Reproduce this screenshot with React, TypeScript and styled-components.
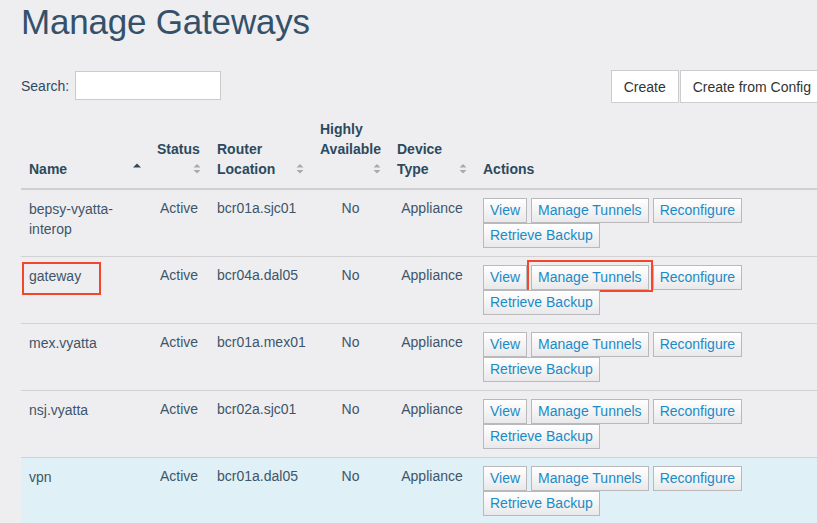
import React from "react";
import styled, { createGlobalStyle, css } from "styled-components";

const GlobalStyle = createGlobalStyle`
  html, body {
    margin: 0;
    padding: 0;
    overflow: hidden;
    background: #eeeef1;
  }
  body {
    font-family: "Liberation Sans", Arial, sans-serif;
    font-size: 14px;
    color: #3c5367;
  }
`;

const Page = styled.div`
  width: 803px;
  padding-left: 21px;
`;

const Title = styled.h1`
  margin: 1px 0 0;
  font-size: 35px;
  line-height: 41px;
  font-weight: normal;
  color: #35516a;
  letter-spacing: -0.2px;
`;

const Toolbar = styled.div`
  display: flex;
  justify-content: space-between;
  align-items: flex-start;
  margin-top: 28px;
  margin-bottom: 8px;
`;

const SearchLabel = styled.label`
  display: flex;
  align-items: center;
  gap: 6px;
  height: 31px;
  font-size: 14px;
  color: #2f4a5f;
`;

const SearchInput = styled.input`
  width: 146px;
  height: 29px;
  box-sizing: border-box;
  border: 1px solid #cbcbcb;
  background: #fff;
  margin: 0;
  padding: 0 6px;
  font: inherit;
`;

const ButtonGroup = styled.div`
  display: flex;
  gap: 1px;
`;

const ToolButton = styled.button`
  height: 33px;
  box-sizing: border-box;
  padding: 0 12px;
  border: 1px solid #cdcdcd;
  background: #fff;
  color: #333;
  font-family: "Liberation Sans", Arial, sans-serif;
  font-size: 14px;
  margin: 0;
`;

const Table = styled.table`
  width: 100%;
  border-collapse: collapse;
  table-layout: fixed;
`;

const Th = styled.th`
  vertical-align: bottom;
  text-align: left;
  padding: 8px 8px 9px;
  font-size: 14px;
  line-height: 20px;
  font-weight: bold;
  color: #2c4a5e;
  border-bottom: 2px solid #cfcfd2;
`;

const HeadLines = styled.div`
  display: flex;
  flex-direction: column;
`;

const HeadLine = styled.div`
  display: flex;
  justify-content: space-between;
  align-items: center;
  white-space: nowrap;
  height: 20px;
`;

const Tr = styled.tr<{ $active?: boolean }>`
  border-bottom: 1px solid #d2d2d5;
  ${(p) =>
    p.$active &&
    css`
      background: #dff0f7;
      border-bottom: none;
    `}
`;

const Td = styled.td<{ $align?: "left" | "center" }>`
  vertical-align: top;
  padding: 8px 8px 8px;
  font-size: 14px;
  line-height: 20px;
  color: #3e5569;
  text-align: ${(p) => p.$align ?? "left"};
  &:first-child {
    padding-top: 9px;
  }
`;

const NameText = styled.span<{ $highlight?: boolean }>`
  position: relative;
  ${(p) =>
    p.$highlight &&
    css`
      &::after {
        content: "";
        position: absolute;
        left: -7px;
        top: -6px;
        width: 79px;
        height: 33px;
        box-sizing: border-box;
        border: 2px solid #f2472b;
      }
    `}
`;

const Actions = styled.div`
  display: flex;
  flex-wrap: wrap;
  column-gap: 4px;
  row-gap: 0;
`;

const ActionButton = styled.button<{ $highlight?: boolean }>`
  position: relative;
  height: 25px;
  box-sizing: border-box;
  padding: 0 6px;
  margin: 0;
  border: 1px solid #b9b9bb;
  background: linear-gradient(#ffffff, #e9e9eb);
  color: #1b8bc7;
  font-family: "Liberation Sans", Arial, sans-serif;
  font-size: 14px;
  line-height: 23px;
  ${(p) =>
    p.$highlight &&
    css`
      &::after {
        content: "";
        position: absolute;
        left: -5px;
        right: -5px;
        top: -6px;
        bottom: -3px;
        border: 2px solid #f2472b;
      }
    `}
`;

const SortIcon = ({ dir }: { dir?: "asc" }) => (
  <svg width="8" height="12" viewBox="0 0 8 12" aria-hidden>
    {dir === "asc" ? (
      <path d="M0 4.5 L4 0.5 L8 4.5 Z" fill="#2c4a5e" />
    ) : (
      <>
        <path d="M0.5 4.5 L4 1 L7.5 4.5 Z" fill="#a9a9ad" />
        <path d="M0.5 7 L4 10.5 L7.5 7 Z" fill="#a9a9ad" />
      </>
    )}
  </svg>
);

type Col = { lines: string[]; width?: number; dir?: "asc"; sortable: boolean };

const columns: Col[] = [
  { lines: ["Name"], width: 128, dir: "asc", sortable: true },
  { lines: ["Status", ""], width: 60, sortable: true },
  { lines: ["Router", "Location"], width: 103, sortable: true },
  { lines: ["Highly", "Available", ""], width: 77, sortable: true },
  { lines: ["Device", "Type"], width: 86, sortable: true },
  { lines: ["Actions"], sortable: false },
];

type Row = { name: string[]; router: string; highlight?: boolean; active?: boolean };

const rows: Row[] = [
  { name: ["bepsy-vyatta-", "interop"], router: "bcr01a.sjc01" },
  { name: ["gateway"], router: "bcr04a.dal05", highlight: true },
  { name: ["mex.vyatta"], router: "bcr01a.mex01" },
  { name: ["nsj.vyatta"], router: "bcr02a.sjc01" },
  { name: ["vpn"], router: "bcr01a.dal05", active: true },
];

export default function App() {
  return (
    <>
      <GlobalStyle />
      <Page>
        <Title>Manage Gateways</Title>
        <Toolbar>
          <SearchLabel>
            Search:
            <SearchInput type="text" />
          </SearchLabel>
          <ButtonGroup>
            <ToolButton>Create</ToolButton>
            <ToolButton>Create from Config</ToolButton>
          </ButtonGroup>
        </Toolbar>
        <Table>
          <colgroup>
            {columns.map((c, i) => (
              <col key={i} style={c.width ? { width: c.width } : undefined} />
            ))}
          </colgroup>
          <thead>
            <tr>
              {columns.map((c, i) => (
                <Th key={i}>
                  <HeadLines>
                    {c.lines.map((l, j) => (
                      <HeadLine key={j}>
                        <span>{l}</span>
                        {c.sortable && j === c.lines.length - 1 && <SortIcon dir={c.dir} />}
                      </HeadLine>
                    ))}
                  </HeadLines>
                </Th>
              ))}
            </tr>
          </thead>
          <tbody>
            {rows.map((r, i) => (
              <Tr key={i} $active={r.active}>
                <Td>
                  {r.name.map((n, j) => (
                    <React.Fragment key={j}>
                      {j > 0 && <br />}
                      <NameText $highlight={r.highlight}>{n}</NameText>
                    </React.Fragment>
                  ))}
                </Td>
                <Td $align="center">Active</Td>
                <Td>{r.router}</Td>
                <Td $align="center">No</Td>
                <Td $align="center">Appliance</Td>
                <Td>
                  <Actions>
                    <ActionButton>View</ActionButton>
                    <ActionButton $highlight={r.highlight}>Manage Tunnels</ActionButton>
                    <ActionButton>Reconfigure</ActionButton>
                    <ActionButton>Retrieve Backup</ActionButton>
                  </Actions>
                </Td>
              </Tr>
            ))}
          </tbody>
        </Table>
      </Page>
    </>
  );
}
